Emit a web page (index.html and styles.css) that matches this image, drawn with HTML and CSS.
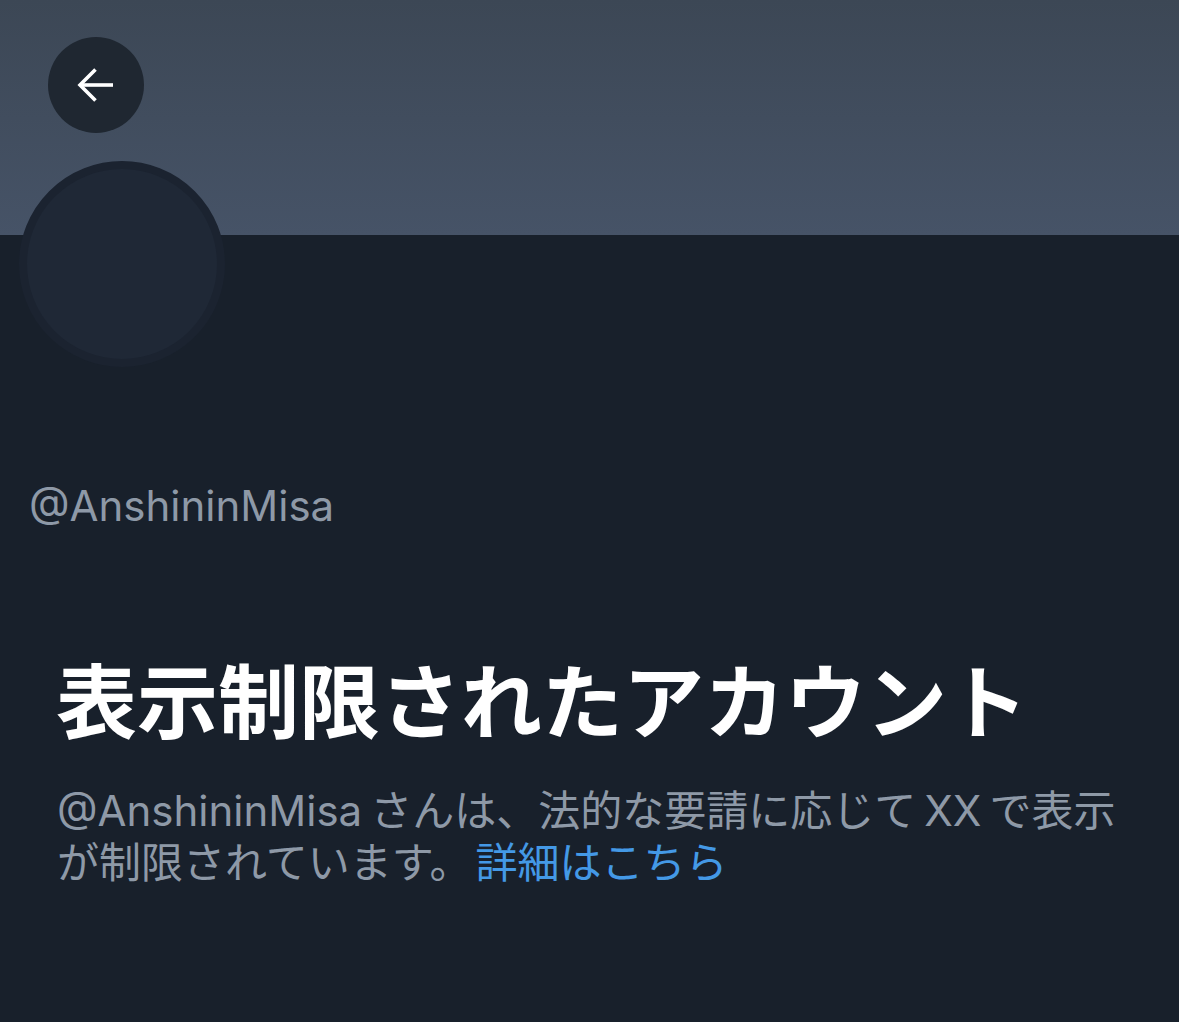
FILE: index.html
```html
<!DOCTYPE html>
<html lang="ja">
<head>
<meta charset="utf-8">
<link rel="stylesheet" href="styles.css">
</head>
<body>
<div class="page">
  <header class="banner">
    <button class="back" aria-label="戻る">
      <svg width="40" height="40" viewBox="0 0 40 40" fill="none" stroke="#fff" stroke-width="3.6" stroke-linecap="butt" stroke-linejoin="miter">
        <path d="M37 20H5"/>
        <path d="M19.5 4.5L4 20L19.5 35.5"/>
      </svg>
    </button>
  </header>
  <div class="avatar"></div>
  <div class="handle">@AnshininMisa</div>
  <section class="notice">
    <h1 class="title">表示制限されたアカウント</h1>
    <p class="desc">@AnshininMisa<span class="gap"></span>さんは、法的な要請に応じて<span class="gap"></span>XX<span class="gap"></span>で表示が制限されています。<a class="link" href="#">詳細はこちら</a></p>
  </section>
</div>
</body>
</html>
```

FILE: styles.css
```css
html, body {
  margin: 0;
  padding: 0;
  background: #18202b;
}
.page {
  width: 1179px;
  height: 1022px;
  overflow: hidden;
  display: flex;
  flex-direction: column;
  font-family: "Inter", "Noto Sans CJK JP", sans-serif;
}
.banner {
  height: 235px;
  box-sizing: border-box;
  padding: 37px 0 0 48px;
  background: linear-gradient(180deg, #3c4755 0%, #465367 100%);
  flex: none;
}
.back {
  width: 96px;
  height: 96px;
  border-radius: 50%;
  border: none;
  background: #1f2731;
  display: flex;
  align-items: center;
  justify-content: center;
  padding: 0;
}
.avatar {
  flex: none;
  width: 190px;
  height: 190px;
  margin: -74px 0 0 19px;
  border: 8px solid #1b2330;
  border-radius: 50%;
  background: #1f2836;
}
.handle {
  margin: 114px 0 0 29px;
  font-size: 42px;
  line-height: 50px;
  color: #8e99a7;
}
.notice {
  padding: 0 0 0 56px;
  margin-top: 116px;
}
.title {
  margin: 0;
  font-family: "Noto Sans CJK JP", sans-serif;
  font-weight: 700;
  font-size: 81px;
  line-height: 100px;
  color: #ffffff;
}
.desc {
  margin: 38px 0 0 1px;
  font-size: 42px;
  line-height: 52px;
  color: #8e99a7;
  width: 1080px;
}
.gap {
  display: inline-block;
  width: 8px;
}
.link {
  color: #4499e6;
  text-decoration: none;
  margin-left: 4px;
}
```
